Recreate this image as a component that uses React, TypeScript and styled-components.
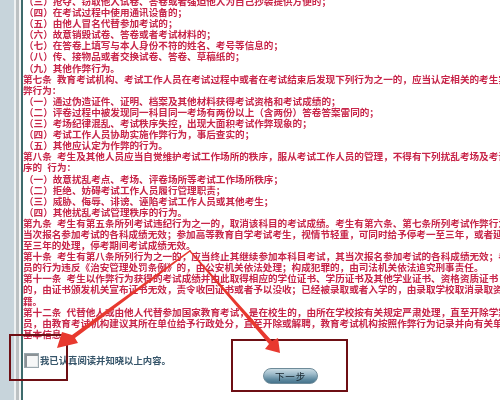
import React from "react";
import styled, { createGlobalStyle } from "styled-components";

const GlobalStyle = createGlobalStyle`
  html, body {
    margin: 0;
    padding: 0;
    width: 500px;
    height: 400px;
    overflow: hidden;
    background: #fff;
  }
`;

const RED = "#c8264a";
const MAROON = "#6e0f14";
const ARROW = "#e8392f";

const Page = styled.div`
  position: relative;
  display: flex;
  width: 500px;
  height: 400px;
  overflow: hidden;
  filter: blur(0.5px);
  font-family: "Noto Sans CJK SC", "Liberation Sans", sans-serif;
`;

const Gutter = styled.div`
  flex: 0 0 14px;
  background: #c7d4db;
`;

const GutterEdge = styled.div`
  flex: 0 0 7px;
  background: linear-gradient(to right, #eef1f2 0 2px, #bcc1c3 2px 5px, #f4f5f5 5px);
`;

const Rule = styled.div`
  flex: 0 0 2px;
  background: #3d6b6c;
`;

const Content = styled.main`
  flex: 1;
  min-width: 0;
  overflow: hidden;
`;

const Terms = styled.div`
  margin-top: -4px;
  white-space: nowrap;
  font-size: 9.6px;
  line-height: 11.1px;
  font-weight: 700;
  word-spacing: 3px;
  color: ${RED};
`;

const Line = styled.div<{ $indent?: boolean }>`
  height: 11.1px;
  padding-left: ${(p) => (p.$indent ? "1px" : "0")};
`;

const AgreeRow = styled.label`
  display: flex;
  align-items: center;
  margin-top: 13px;
  font-size: 9.35px;
  line-height: 15px;
  font-weight: 700;
  color: #36556a;
`;

const CheckBox = styled.span`
  box-sizing: border-box;
  display: block;
  width: 15px;
  height: 15px;
  margin-left: 1px;
  margin-right: 1px;
  border: 1px solid #9aa7ad;
  box-shadow: inset 2px 2px 0 #8b9296, inset -1px -1px 0 #e5e9ea;
  background: #f6f7f7;
`;

const NextRow = styled.div`
  display: flex;
  justify-content: center;
  padding-left: 58px;
`;

const NextButton = styled.button`
  width: 55px;
  height: 16px;
  padding: 0;
  border: 1px solid #6e8b99;
  border-radius: 8px;
  background: linear-gradient(to bottom, #c9dbe3 0%, #9fbccb 35%, #5f8aa0 75%, #47748c 100%);
  color: #17242c;
  font-family: inherit;
  font-size: 9.5px;
  letter-spacing: 0.8px;
  line-height: 14px;
`;

const Marker = styled.div<{ $x: number; $y: number; $w: number; $h: number }>`
  position: absolute;
  box-sizing: border-box;
  left: ${(p) => p.$x}px;
  top: ${(p) => p.$y}px;
  width: ${(p) => p.$w}px;
  height: ${(p) => p.$h}px;
  border: 2px solid ${MAROON};
`;

const Arrows = styled.svg`
  position: absolute;
  inset: 0;
  width: 500px;
  height: 400px;
  pointer-events: none;
`;

const LINES: [string, boolean?][] = [
  ["（三）抢夺、窃取他人试卷、答卷或者强迫他人为自己抄袭提供方便的；", true],
  ["（四）在考试过程中使用通讯设备的；", true],
  ["（五）由他人冒名代替参加考试的；", true],
  ["（六）故意销毁试卷、答卷或者考试材料的；", true],
  ["（七）在答卷上填写与本人身份不符的姓名、考号等信息的；", true],
  ["（八）传、接物品或者交换试卷、答卷、草稿纸的；", true],
  ["（九）其他作弊行为。", true],
  ["第七条 教育考试机构、考试工作人员在考试过程中或者在考试结束后发现下列行为之一的，应当认定相关的考生实"],
  ["弊行为："],
  ["（一）通过伪造证件、证明、档案及其他材料获得考试资格和考试成绩的；", true],
  ["（二）评卷过程中被发现同一科目同一考场有两份以上（含两份）答卷答案雷同的；", true],
  ["（三）考场纪律混乱、考试秩序失控，出现大面积考试作弊现象的；", true],
  ["（四）考试工作人员协助实施作弊行为，事后查实的；", true],
  ["（五）其他应认定为作弊的行为。", true],
  ["第八条 考生及其他人员应当自觉维护考试工作场所的秩序，服从考试工作人员的管理，不得有下列扰乱考场及考试"],
  ["序的 行为："],
  ["（一）故意扰乱考点、考场、评卷场所等考试工作场所秩序；", true],
  ["（二）拒绝、妨碍考试工作人员履行管理职责；", true],
  ["（三）威胁、侮辱、诽谤、诬陷考试工作人员或其他考生；", true],
  ["（四）其他扰乱考试管理秩序的行为。", true],
  ["第九条 考生有第五条所列考试违纪行为之一的，取消该科目的考试成绩。考生有第六条、第七条所列考试作弊行为"],
  ["当次报名参加考试的各科成绩无效；参加高等教育自学考试考生，视情节轻重，可同时给予停考一至三年，或者延"],
  ["至三年的处理，停考期间考试成绩无效。"],
  ["第十条 考生有第八条所列行为之一的，应当终止其继续参加本科目考试，其当次报名参加考试的各科成绩无效；考"],
  ["员的行为违反《治安管理处罚条例》的，由公安机关依法处理；构成犯罪的，由司法机关依法追究刑事责任。"],
  ["第十一条 考生以作弊行为获得的考试成绩并由此取得相应的学位证书、学历证书及其他学业证书、资格资质证书"],
  ["的，由证书颁发机关宣布证书无效，责令收回证书或者予以没收；已经被录取或者入学的，由录取学校取消录取资"],
  ["籍。"],
  ["第十二条 代替他人或由他人代替参加国家教育考试，是在校生的，由所在学校按有关规定严肃处理，直至开除学籍"],
  ["员，由教育考试机构建议其所在单位给予行政处分，直至开除或解聘，教育考试机构按照作弊行为记录并向有关单"],
  ["基本信息。"],
];

export default function App() {
  return (
    <Page>
      <GlobalStyle />
      <Gutter />
      <GutterEdge />
      <Rule />
      <Content>
        <Terms>
          {LINES.map(([text, indent], i) => (
            <Line key={i} $indent={indent}>
              {text}
            </Line>
          ))}
        </Terms>
        <AgreeRow>
          <CheckBox />
          我已认真阅读并知晓以上内容。
        </AgreeRow>
        <NextRow>
          <NextButton type="button">下一步</NextButton>
        </NextRow>
      </Content>
      <Marker $x={9} $y={334} $w={59} $h={47} />
      <Marker $x={231} $y={339} $w={117} $h={53} />
      <Arrows viewBox="0 0 500 400">
        <path d="M190 250 L72 335 L62 332 L57 348 L78 343 L75 338 L191 251 Z" fill={ARROW} />
        <path d="M189 251 L269 344 L265 349 L280 353 L278 338 L272 341 L190 250 Z" fill={ARROW} />
      </Arrows>
    </Page>
  );
}
